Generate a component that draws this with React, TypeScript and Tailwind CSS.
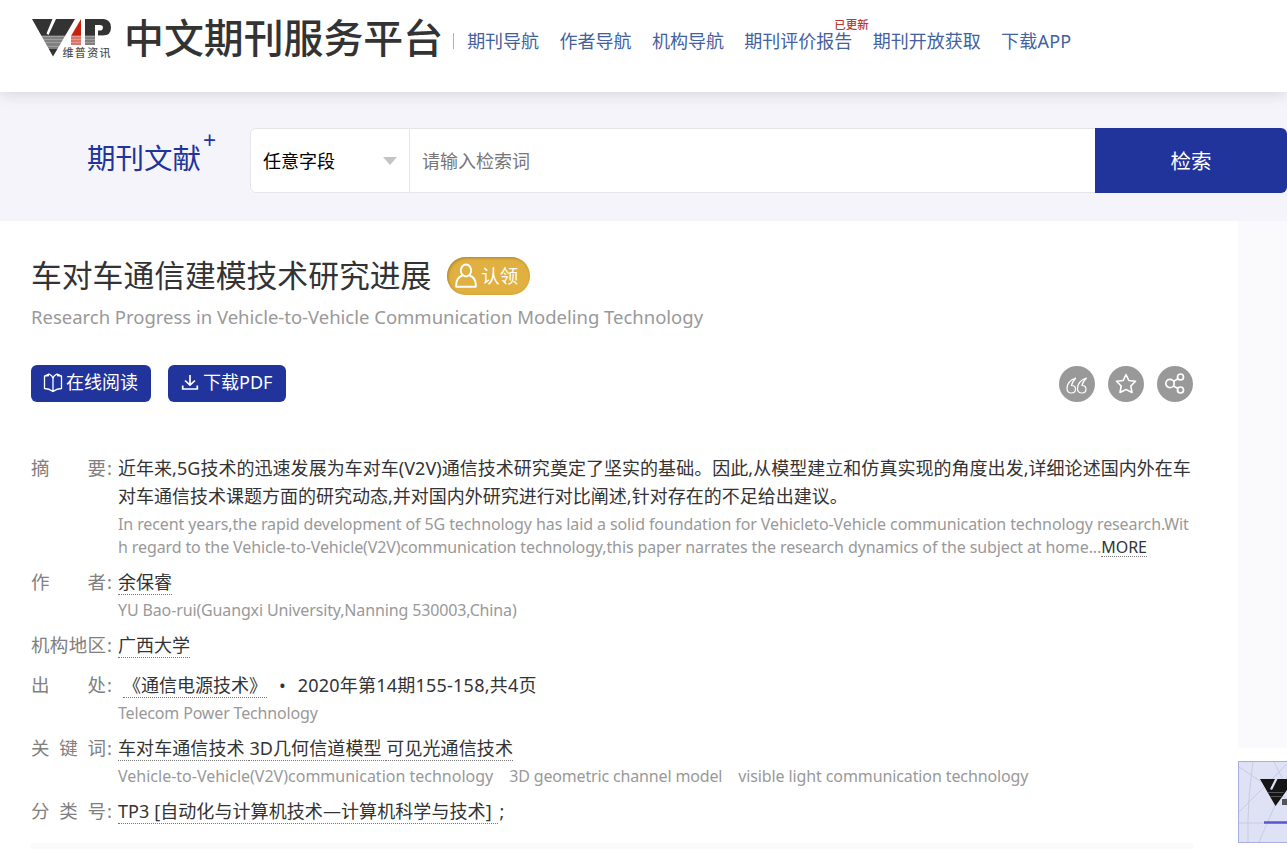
import React from "react";

const underline = "border-b border-dotted border-[#777]";

function VipMark({ className = "" }: { className?: string }) {
  return (
    <svg viewBox="0 0 80 40" className={className} aria-hidden="true">
      <path d="M0 0H20.500L14.500 14.500L16.500 16L24 0H43L21 37.500Z" fill="#333" />
      <path d="M49 0V26H39V17Z" fill="#c8200f" />
      <path d="M53 0H72Q79 1 79 8.500Q79 16.500 71 16.500H66V11.500H68.500Q71 11 71 8.500Q71 6 68 6H63V26H53Z" fill="#333" />
      <path d="M0 16.500H80V30H0Z" fill="#fff" opacity="0.38" />
      <path d="M0 17H80V18H0ZM0 20H80V21H0ZM0 23H80V24H0ZM0 27H35V28H0Z" fill="#fff" opacity="0.25" />
      <text x="30.500" y="38" fontSize="11" fontWeight="500" fill="#555" fontFamily="Noto Sans CJK SC, sans-serif" textLength="48">维普资讯</text>
    </svg>
  );
}

function Row({ label, children, className = "" }: { label: string; children: React.ReactNode; className?: string }) {
  return (
    <div className={"flex " + className}>
      <div className="flex h-7 w-[87px] shrink-0 items-center text-[18.500px] text-[#808080]">
        <span className="flex w-[75px] justify-between">
          {label.split("").map((c) => <span key={c}>{c}</span>)}
        </span>
        <span className="ml-px">:</span>
      </div>
      <div className="min-w-0 flex-1 whitespace-nowrap">{children}</div>
    </div>
  );
}

const english = "block h-[23px] text-[16px] leading-[23px] text-[#999]";
const chinese = "block h-7 text-[18px] leading-7 text-[#333]";

export default function App() {
  return (
    <div className="h-[849px] w-[1287px] overflow-hidden bg-white font-['Noto_Sans','Noto_Sans_CJK_SC',sans-serif]">
      <header className="relative z-10 flex h-[92px] items-start bg-white shadow-[0_2px_14px_rgba(0,0,0,0.13)]">
        <VipMark className="ml-8 mt-[19px] h-10 w-20" />
        <h1 className="ml-3 mt-[13px] h-[50px] whitespace-nowrap text-[39.900px] font-medium leading-[50px] text-[#333]">中文期刊服务平台</h1>
        <span className="ml-[10px] mt-[33px] h-4 w-px bg-[#a8b4cf]" />
        <nav className="ml-[13px] mt-[27px] flex h-7 gap-[20.400px] whitespace-nowrap text-[18px] leading-7 text-[#43619f]">
          <a>期刊导航</a>
          <a>作者导航</a>
          <a>机构导航</a>
          <a className="relative">期刊评价报告<sup className="absolute -top-[10px] left-[90px] text-[11.500px] font-medium leading-4 text-[#c0392f]">已更新</sup></a>
          <a>期刊开放获取</a>
          <a className="tracking-[0.2px]">下载APP</a>
        </nav>
      </header>

      <section className="flex h-[129px] items-start bg-[#f5f4fa] pt-9">
        <div className="ml-[87px] mt-2 flex w-[163px] text-[28.500px] leading-[44px] text-[#20349c]">
          <span>期刊文献</span>
          <span className="-mt-[18px] ml-0.5 text-[23px]">+</span>
        </div>
        <form className="flex h-[65px] flex-1">
          <div className="flex w-40 items-center justify-between rounded-l-md border border-[#e6e6ea] bg-white pl-3 pr-3 text-[18px] text-black">
            <span className="pt-0.5">任意字段</span>
            <span className="border-x-[7px] border-t-8 border-x-transparent border-t-[#c4c4c4]" />
          </div>
          <div className="flex flex-1 items-center border-y border-[#e6e6ea] bg-white pl-3 pt-0.5 text-[18px] text-[#777]">请输入检索词</div>
          <button type="button" className="w-48 rounded-r-md bg-[#20349c] pt-0.5 text-[20.500px] text-white">检索</button>
        </form>
      </section>

      <div className="flex h-[628px]">
        <main className="w-[1193px] pl-[31px]">
          <div className="flex h-[110px] items-center">
            <h2 className="-mt-0.5 whitespace-nowrap text-[30.800px] leading-10 text-[#333]">车对车通信建模技术研究进展</h2>
            <span className="ml-4 flex h-[38px] w-[83px] items-center rounded-full bg-[#e0b040] pl-2 text-[18.500px] text-white shadow-[inset_1px_1px_3px_#a88430]">
              <svg viewBox="0 0 22 26" className="mr-1 h-[26px] w-[22px]" fill="none" stroke="currentColor" strokeWidth="1.900" strokeLinejoin="round">
                <ellipse cx="11" cy="7.500" rx="5.200" ry="6" />
                <path d="M7.500 12.500Q1.200 14.500 1.200 22V23.800H20.800V22Q20.800 14.500 14.500 12.500" />
              </svg>
              认领
            </span>
          </div>
          <p className="-mt-[28px] h-7 whitespace-nowrap text-[18.500px] leading-7 tracking-[-0.015px] text-[#999]">Research Progress in Vehicle-to-Vehicle Communication Modeling Technology</p>

          <div className="mt-[34px] flex h-[37px] items-center">
            <button type="button" className="flex h-[37px] w-[120px] items-center rounded-md bg-[#20349c] pl-3 text-[18px] text-white">
              <svg viewBox="0 0 20 20" className="mb-px mr-[3px] h-5 w-5" fill="none" stroke="currentColor" strokeWidth="1.300" strokeLinejoin="round">
                <path d="M10 5.500Q9.500 2.500 6 1L1.500 3V15.500Q6 15.500 10 18.500Q14 15.500 18.500 15.500V3L14 1Q10.500 2.500 10 5.500V18.500M1.500 3L6 2.500M18.500 3L14 2.500" />
              </svg>
              <span className="-mt-0.5">在线阅读</span>
            </button>
            <button type="button" className="ml-[17px] flex h-[37px] w-[118px] items-center rounded-md bg-[#20349c] pl-[13px] text-[18px] text-white">
              <svg viewBox="0 0 18 18" className="mb-1 mr-1 h-[18px] w-[18px]" fill="none" stroke="currentColor" strokeWidth="1.700">
                <path d="M9 2V12M4 7.500L9 12.200L14 7.500M1.700 12.500V16H16.300V12.500" />
              </svg>
              <span className="-mt-0.5">下载PDF</span>
            </button>
            <div className="ml-auto flex gap-[13px] text-white">
              <span className="flex size-9 items-center justify-center rounded-full bg-[#999]">
                <svg viewBox="0 0 24 24" className="mt-0.5 size-6" fill="none" stroke="currentColor" strokeWidth="1.200">
                  <path d="M11 5Q2 8 2 15.500Q2 20 6.500 20Q10.500 20 10.500 16Q10.500 12.500 6.500 12.500Q7 9 11 5ZM21.500 5Q12.500 8 12.500 15.500Q12.500 20 17 20Q21 20 21 16Q21 12.500 17 12.500Q17.500 9 21.500 5Z" />
                </svg>
              </span>
              <span className="flex size-9 items-center justify-center rounded-full bg-[#999]">
                <svg viewBox="0 0 24 24" className="size-6" fill="none" stroke="currentColor" strokeWidth="1.600" strokeLinejoin="round">
                  <path d="M12 2.500L14.800 8.500L21.500 9.200L16.800 14L18 20.500L12 17.500L6 20.500L7.200 14L2.500 9.200L9.200 8.500Z" />
                </svg>
              </span>
              <span className="flex size-9 items-center justify-center rounded-full bg-[#999]">
                <svg viewBox="0 0 24 24" className="size-6" fill="none" stroke="currentColor" strokeWidth="1.700">
                  <circle cx="7" cy="11.500" r="4.200" />
                  <circle cx="17.500" cy="5" r="3" />
                  <circle cx="17.500" cy="18" r="3" />
                  <path d="M10.500 9.500L15 6.600M10.500 14L15 16.400" />
                </svg>
              </span>
            </div>
          </div>

          <div className="mt-[52px]">
            <Row label="摘要" className="h-[114px]">
              <span className={chinese + " tracking-[0.035px]"}>近年来,5G技术的迅速发展为车对车(V2V)通信技术研究奠定了坚实的基础。因此,从模型建立和仿真实现的角度出发,详细论述国内外在车</span>
              <span className={chinese}>对车通信技术课题方面的研究动态,并对国内外研究进行对比阐述,针对存在的不足给出建议。</span>
              <span className={english + " mt-[3px] tracking-[-0.1px]"}>In recent years,the rapid development of 5G technology has laid a solid foundation for Vehicleto-Vehicle communication technology research.Wit</span>
              <span className={english + " tracking-[-0.115px]"}>h regard to the Vehicle-to-Vehicle(V2V)communication technology,this paper narrates the research dynamics of the subject at home...<a className="inline-block h-[21px] border-b border-dotted border-[#777] tracking-normal text-[#333]">MORE</a></span>
            </Row>
            <Row label="作者" className="h-[63px]">
              <span className={chinese}><a className={underline}>余保睿</a></span>
              <span className={english + " mt-[3px] tracking-[-0.135px]"}>YU Bao-rui(Guangxi University,Nanning 530003,China)</span>
            </Row>
            <Row label="机构地区" className="h-10">
              <span className={chinese}><a className={underline}>广西大学</a></span>
            </Row>
            <Row label="出处" className="h-[63px]">
              <span className={chinese}><a className={"ml-[5px] " + underline}>《通信电源技术》</a><span className="mx-3">•</span><span className="tracking-[0.22px]">2020年第14期155-158,共4页</span></span>
              <span className={english + " mt-[3px] tracking-[-0.16px]"}>Telecom Power Technology</span>
            </Row>
            <Row label="关键词" className="h-[63px]">
              <span className={chinese + " tracking-[0.09px]"}><a className={underline}>车对车通信技术 </a><a className={underline}>3D几何信道模型 </a><a className={underline}>可见光通信技术</a></span>
              <span className={english + " mt-[3px]"}>Vehicle-to-Vehicle(V2V)communication technology<span className="ml-4 tracking-[-0.16px]">3D geometric channel model</span><span className="ml-4 tracking-[-0.11px]">visible light communication technology</span></span>
            </Row>
            <Row label="分类号" className="h-[47px]">
              <span className={chinese + " tracking-[0.08px]"}><a className={"pr-0.5 " + underline}>TP3 [自动化与计算机技术—计算机科学与技术] </a><span className="ml-px">;</span></span>
            </Row>
          </div>
          <div className="-mt-px h-2 bg-[#fafafc]" />
        </main>
        <aside className="ml-[45px] w-[49px] overflow-hidden">
          <div className="h-[527px] bg-[#fafafc]" />
          <div className="mt-[13px] h-[82px] w-[100px] border border-[#a9aee0] bg-[#dfe1f5]">
            <svg viewBox="0 0 98 80" className="h-20 w-[98px] max-w-none" fill="none" stroke="#c9cbe0">
              <path d="M14 0Q8 40 9 80M0 50L60 -10M0 5L60 45M0 61H60M55 0L20 80M35 0L60 50" />
              <path d="M21 17H36L31 27L33 28L38.500 17H56L36.500 44Z" fill="#151515" stroke="none" />
              <path d="M28.500 30H45L44 31H29.500ZM31 34H43L42 35H32Z" fill="#555" stroke="none" />
              <path d="M43 37H56V43H43Z" fill="#555" stroke="none" />
              <path d="M25 60.500H98" stroke="#5558cf" strokeWidth="2.500" />
            </svg>
          </div>
        </aside>
      </div>
    </div>
  );
}
